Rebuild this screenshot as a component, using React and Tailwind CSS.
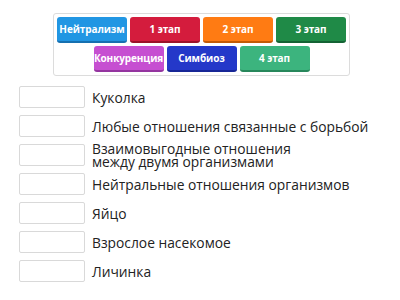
export default function App() {
  const tiles = [
    [
      { t: "Нейтрализм", c: "bg-[#2196e3] border-[#1670b0]" },
      { t: "1 этап", c: "bg-[#d41c3d] border-[#9c1229]" },
      { t: "2 этап", c: "bg-[#ff7b13] border-[#c45a05]" },
      { t: "3 этап", c: "bg-[#1f8a47] border-[#146334]" },
    ],
    [
      { t: "Конкуренция", c: "bg-[#c64fd1] border-[#9435a0]" },
      { t: "Симбиоз", c: "bg-[#2438c9] border-[#172696]" },
      { t: "4 этап", c: "bg-[#3cb47e] border-[#27875b]" },
    ],
  ];
  const items = [
    ["Куколка"],
    ["Любые отношения связанные с борьбой"],
    ["Взаимовыгодные отношения", "между двумя организмами"],
    ["Нейтральные отношения организмов"],
    ["Яйцо"],
    ["Взрослое насекомое"],
    ["Личинка"],
  ];
  return (
    <div className="w-[400px] h-[300px] bg-white overflow-hidden font-['Open_Sans',sans-serif]">
      <div className="pt-[13px] flex justify-center">
        <div className="w-[297px] ml-[3px] border border-[#dcdcdc] rounded-[3px] p-[3px] flex flex-col gap-[3px] items-center">
          {tiles.map((row, i) => (
            <div key={i} className="flex gap-[3px]">
              {row.map((b) => (
                <div
                  key={b.t}
                  className={`w-[70px] h-[26px] rounded-[3px] border-b-2 flex items-center justify-center text-white font-bold text-[10px] tracking-[-0.1px] whitespace-nowrap ${b.c}`}
                >
                  {b.t}
                </div>
              ))}
            </div>
          ))}
        </div>
      </div>
      <div className="mt-[10px] pl-[19px] flex flex-col gap-[7px]">
        {items.map((lines, i) => (
          <div key={i} className="flex items-center h-[22px]">
            <div className="w-[66px] h-[22px] border border-[#d9d9d9] rounded-[2px] shrink-0" />
            <p className="ml-[7px] text-[13.8px] leading-[13px] text-[#222]">
              {lines[0]}
              {lines[1] && (
                <>
                  <br />
                  {lines[1]}
                </>
              )}
            </p>
          </div>
        ))}
      </div>
    </div>
  );
}
